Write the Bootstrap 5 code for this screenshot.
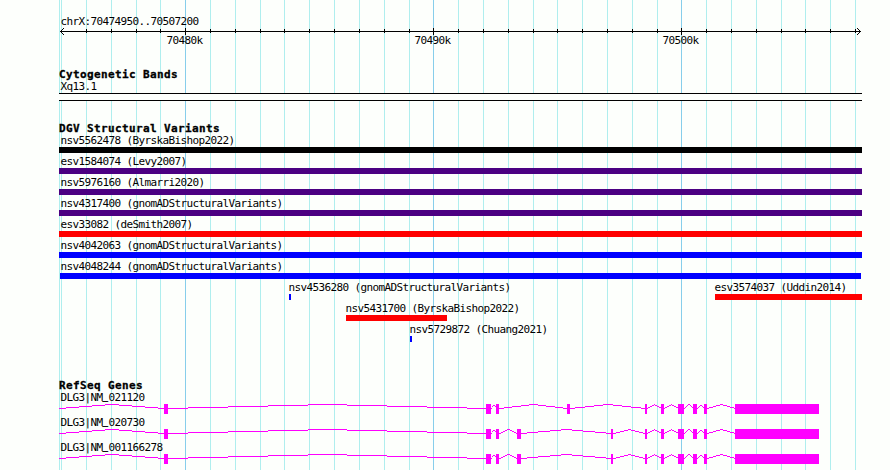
<!DOCTYPE html>
<html lang="en">
<head>
  <meta charset="UTF-8">
  <title>chrX:70474950..70507200</title>
  <link href="https://cdn.jsdelivr.net/npm/bootstrap@5.3.3/dist/css/bootstrap.min.css" rel="stylesheet">
  <style>
    body {
      background: #fdfffc;
      color: #000;
      font: 11px/13px "DejaVu Sans Mono", monospace;
      letter-spacing: -0.622px;
    }
    .browser { width: 890px; height: 470px; padding: 15px 28px 0 59px; }
    .gridlines { z-index: -1; }
    svg { shape-rendering: crispEdges; }
    .region-label, .track-text { padding-left: 1.5px; white-space: pre; }
    .region-label { height: 13px; }
    .ruler { height: 40px; }
    .track-title {
      height: 12px;
      font-weight: 700;
      letter-spacing: 0.378px;
      -webkit-text-stroke: 0.3px #000;
      white-space: pre;
    }
    .cytoband { height: 8px; border: solid #000; border-width: 1px 0; background: #fdfffc; }
    .cyto-track { height: 54px; }
    .sv-track { height: 257px; }
    .sv-row { display: grid; height: 21px; }
    .sv-row > div { grid-area: 1 / 1; }
    .sv-row .track-text { height: 13px; }
    .sv-bar { height: 6px; }
    .gene { height: 25px; }
    .gene .track-text { height: 13px; }
    /* keeps the underscore clear of the intron line below */
    .underscore {
      font-size: 9px;
      line-height: 0;
      letter-spacing: 0.58px;
      vertical-align: 1px;
      -webkit-text-stroke: 0.5px #000;
    }
  </style>
</head>
<body>

  <div class="browser position-relative overflow-hidden">
    <svg id="grid" class="gridlines position-absolute top-0 start-0" width="890" height="470"></svg>

    <!-- Ruler -->
    <div class="region-label">chrX:70474950..70507200</div>
    <svg id="ruler" class="ruler d-block overflow-visible" width="803" height="40"></svg>

    <!-- Cytogenetic bands -->
    <section class="cyto-track">
      <div class="track-title">Cytogenetic Bands</div>
      <div class="track-text">Xq13.1</div>
      <div class="cytoband"></div>
    </section>

    <!-- Structural variants -->
    <section class="sv-track">
      <div class="track-title">DGV Structural Variants</div>
      <div id="variants"></div>
    </section>

    <!-- Genes -->
    <section>
      <div class="track-title">RefSeq Genes</div>
      <div id="genes"></div>
    </section>
  </div>

  <script src="https://cdn.jsdelivr.net/npm/bootstrap@5.3.3/dist/js/bootstrap.bundle.min.js"></script>
  <script>
    const LEFT = 59;
    const minor = [61, 86, 111, 136, 160, 210, 235, 260, 284, 309, 334, 359, 384, 409,
      458, 483, 508, 533, 557, 582, 607, 632, 657, 706, 731, 756, 781, 805, 830, 855];
    const major = { 185: '70480k', 433: '70490k', 681: '70500k' };

    const rect = (x, y, w, h, fill) =>
      `<rect x="${x}" y="${y}" width="${w}" height="${h}" fill="${fill}"/>`;

    // Grid
    let grid = rect(LEFT, 0, 1, 470, '#afeeee');
    minor.forEach(x => grid += rect(x, 0, 1, 470, '#afeeee'));
    Object.keys(major).forEach(x => grid += rect(x, 0, 1, 470, '#87ceeb'));
    document.getElementById('grid').innerHTML = grid;

    // Ruler with ticks and arrowheads
    let ruler = rect(1, 3, 801, 1, '#000');
    for (let i = 1; i < 4; i++) {
      ruler += rect(1 + i, 3 - i, 1, 1, '#000') + rect(1 + i, 3 + i, 1, 1, '#000');
      ruler += rect(801 - i, 3 - i, 1, 1, '#000') + rect(801 - i, 3 + i, 1, 1, '#000');
    }
    minor.slice(1).forEach(x => ruler += rect(x - LEFT, 1, 1, 4, '#000'));
    for (const [x, label] of Object.entries(major)) {
      ruler += rect(x - LEFT, 0, 1, 7, '#000');
      ruler += `<text x="${x - LEFT - 18.5}" y="16">${label}</text>`;
    }
    document.getElementById('ruler').innerHTML = ruler;

    // Variants: name, start, end, colour
    const rows = [
      [['nsv5562478 (ByrskaBishop2022)', 59, 862, '#000']],
      [['esv1584074 (Levy2007)', 59, 862, '#4b0082']],
      [['nsv5976160 (Almarri2020)', 59, 862, '#4b0082']],
      [['nsv4317400 (gnomADStructuralVariants)', 59, 862, '#4b0082']],
      [['esv33082 (deSmith2007)', 59, 862, '#f00']],
      [['nsv4042063 (gnomADStructuralVariants)', 59, 862, '#00f']],
      [['nsv4048244 (gnomADStructuralVariants)', 60, 861, '#00f']],
      [['nsv4536280 (gnomADStructuralVariants)', 289, 291, '#00f'],
       ['esv3574037 (Uddin2014)', 715, 862, '#f00']],
      [['nsv5431700 (ByrskaBishop2022)', 346, 447, '#f00']],
      [['nsv5729872 (Chuang2021)', 410, 412, '#00f']]
    ];
    document.getElementById('variants').innerHTML = rows.map(row =>
      `<div class="sv-row">${row.map(([name, start, end, color]) => {
        const textX = Math.max(start - 2, LEFT) - start;
        return `<div style="margin-left:${start - LEFT}px">
          <div class="track-text" style="margin-left:${textX}px">${name}</div>
          <div class="sv-bar" style="width:${end - start}px;background:${color}"></div>
        </div>`;
      }).join('')}</div>`).join('');

    // Genes: exons as [start, end]
    const head = [[164, 168], [486, 491], [496, 499]];
    const tail = [[645, 647], [661, 664], [678, 684], [693, 697], [704, 707], [735, 819]];
    const genes = [
      ['DLG3|NM_021120', [...head, [567, 570], ...tail]],
      ['DLG3|NM_020730', [...head, [517, 521], [611, 613], ...tail]],
      ['DLG3|NM_001166278', [...head, [517, 521], [611, 613], ...tail]]
    ];

    // Introns peak halfway between two exons, stepped in whole pixels
    function intron(start, end) {
      const half = (end - start) / 2;
      let out = '', runStart = start, runY = 4;
      for (let x = start; x <= end; x++) {
        const y = x === end ? -1 : Math.round(4 * Math.abs(x - start - half) / half);
        if (y !== runY) {
          if (x > runStart) out += rect(runStart - LEFT, runY, x - runStart, 1, '#f0f');
          runStart = x;
          runY = y;
        }
      }
      return out;
    }

    document.getElementById('genes').innerHTML = genes.map(([name, exons]) => {
      let shape = '', prev = LEFT;
      exons.forEach(([start, end]) => {
        shape += intron(prev, start) + rect(start - LEFT, 0, end - start, 10, '#f0f');
        prev = end;
      });
      const label = name.replace('_', '<span class="underscore">_</span>');
      return `<div class="gene"><div class="track-text">${label}</div>
        <svg class="d-block" width="803" height="10">${shape}</svg></div>`;
    }).join('');
  </script>
</body>
</html>
